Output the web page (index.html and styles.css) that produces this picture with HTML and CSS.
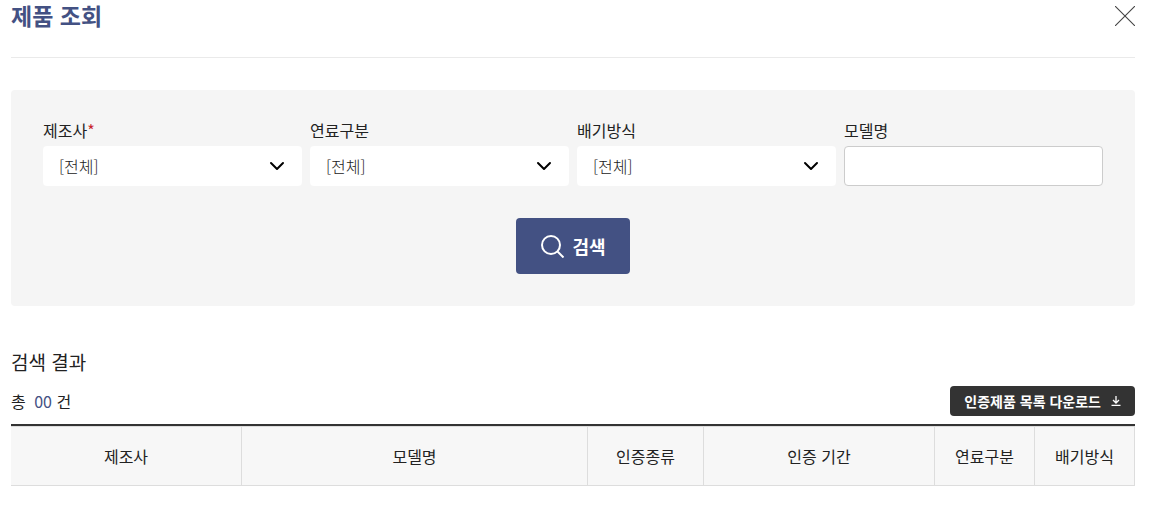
FILE: index.html
```html
<!DOCTYPE html>
<html lang="ko">
<head>
  <meta charset="UTF-8" />
  <meta name="viewport" content="width=device-width, initial-scale=1.0"/>
  <title>제품 조회</title>
  <link rel="stylesheet" href="styles.css">
</head>
<body>
  <header class="pop-header">
    <h1>제품 조회</h1>
    <button type="button" class="close-btn" aria-label="닫기">
      <svg width="20" height="20" viewBox="0 0 20 20"><path d="M0 0L20 20M20 0L0 20" fill="none" stroke="#444" stroke-width="1.1"/></svg>
    </button>
  </header>

  <!-- 검색 조건 -->
  <form class="search-box">
    <div class="fields">
      <div class="field">
        <label for="maker">제조사<span class="required">*</span></label>
        <select id="maker"><option>[전체]</option></select>
      </div>
      <div class="field">
        <label for="fuel">연료구분</label>
        <select id="fuel"><option>[전체]</option></select>
      </div>
      <div class="field">
        <label for="exhaust">배기방식</label>
        <select id="exhaust"><option>[전체]</option></select>
      </div>
      <div class="field">
        <label for="model">모델명</label>
        <input type="text" id="model" />
      </div>
    </div>
    <button type="submit" class="search-btn">
      <svg width="24" height="24" viewBox="0 0 24 24"><path d="M17.3 17.3L23.5 23.5M20 11a9 9 0 1 1-18 0a9 9 0 0 1 18 0z" fill="none" stroke="#fff" stroke-width="2"/></svg>
      검색
    </button>
  </form>

  <!-- 검색 결과 -->
  <h2>검색 결과</h2>
  <div class="result-top">
    <p>총 <span class="count">00</span> 건</p>
    <button type="button" class="download-btn">
      인증제품 목록 다운로드
      <svg width="10" height="10" viewBox="0 0 10 10"><path d="M5 0v7M2 4l3 3l3-3M0.5 9.3h9" fill="none" stroke="#fff" stroke-width="1.3"/></svg>
    </button>
  </div>
  <table class="result-table">
    <colgroup>
      <col class="w-maker"><col class="w-model"><col class="w-type"><col class="w-period"><col class="w-fuel"><col class="w-exhaust">
    </colgroup>
    <thead>
      <tr>
        <th>제조사</th>
        <th>모델명</th>
        <th>인증종류</th>
        <th>인증 기간</th>
        <th>연료구분</th>
        <th>배기방식</th>
      </tr>
    </thead>
  </table>
</body>
</html>
```
FILE: styles.css
```css
* {
  box-sizing: border-box;
}
body {
  font-family: "Noto Sans CJK KR", sans-serif;
  font-size: 16px;
  line-height: 24px;
  color: #222;
  background-color: #fff;
  margin: 0;
  padding: 0 14px 0 11px;
}
h1, h2, p {
  margin: 0;
}
button, input, select {
  font-family: inherit;
  color: inherit;
}
button {
  border: none;
  cursor: pointer;
}
.pop-header {
  display: flex;
  justify-content: space-between;
  align-items: flex-start;
  height: 58px;
  border-bottom: 1px solid #eaeaea;
}
h1 {
  font-size: 23px;
  line-height: 30px;
  font-weight: 700;
  color: #435183;
}
.close-btn {
  display: flex;
  background: none;
  padding: 6px 0;
}
.search-box {
  margin-top: 32px;
  padding: 28px 32px 32px;
  border-radius: 4px;
  background-color: #f5f5f5;
}
.fields {
  display: grid;
  grid-template-columns: repeat(4, 1fr);
  gap: 8px;
}
.field label {
  display: block;
  line-height: 24px;
  margin-bottom: 4px;
}
.required {
  color: #c8252c;
}
.field select, .field input {
  display: block;
  width: 100%;
  height: 40px;
  padding: 0 16px;
  font-size: 16px;
  font-weight: 300;
  border: none;
  border-radius: 4px;
  background-color: #fff;
}
.field input {
  border: 1px solid #ccc;
}
.field select {
  appearance: none;
  background-image: url("data:image/svg+xml,%3Csvg xmlns='http://www.w3.org/2000/svg' width='16' height='10' viewBox='0 0 16 10'%3E%3Cpath d='M2 2l6 6l6-6' fill='none' stroke='%23000' stroke-width='2' stroke-linecap='round' stroke-linejoin='round'/%3E%3C/svg%3E");
  background-repeat: no-repeat;
  background-position: right 17px center;
}
.search-btn {
  display: flex;
  align-items: center;
  gap: 8px;
  height: 56px;
  margin: 32px auto 0;
  padding: 0 24px;
  font-size: 18px;
  line-height: 24px;
  font-weight: 700;
  color: #fff;
  border-radius: 4px;
  background-color: #435183;
}
h2 {
  margin-top: 42px;
  font-size: 19px;
  line-height: 28px;
  font-weight: 400;
}
.result-top {
  display: flex;
  justify-content: space-between;
  align-items: center;
  margin: 10px 0 8px;
}
.count {
  margin-left: 4px;
  color: #435183;
}
.download-btn {
  display: flex;
  align-items: center;
  gap: 10px;
  height: 30px;
  padding: 0 14px;
  font-size: 14px;
  line-height: 20px;
  font-weight: 700;
  color: #fff;
  border-radius: 4px;
  background-color: #333;
}
.result-table {
  width: 100%;
  table-layout: fixed;
  border-collapse: separate;
  border-spacing: 0;
  border-top: 2px solid #333;
}
.result-table th {
  height: 60px;
  padding: 0;
  font-weight: 400;
  border: 1px solid #ddd;
  border-left: none;
  background-color: #f7f7f7;
}
.w-maker, .w-period {
  width: 231px;
}
.w-type {
  width: 116px;
}
.w-fuel, .w-exhaust {
  width: 100px;
}
```
